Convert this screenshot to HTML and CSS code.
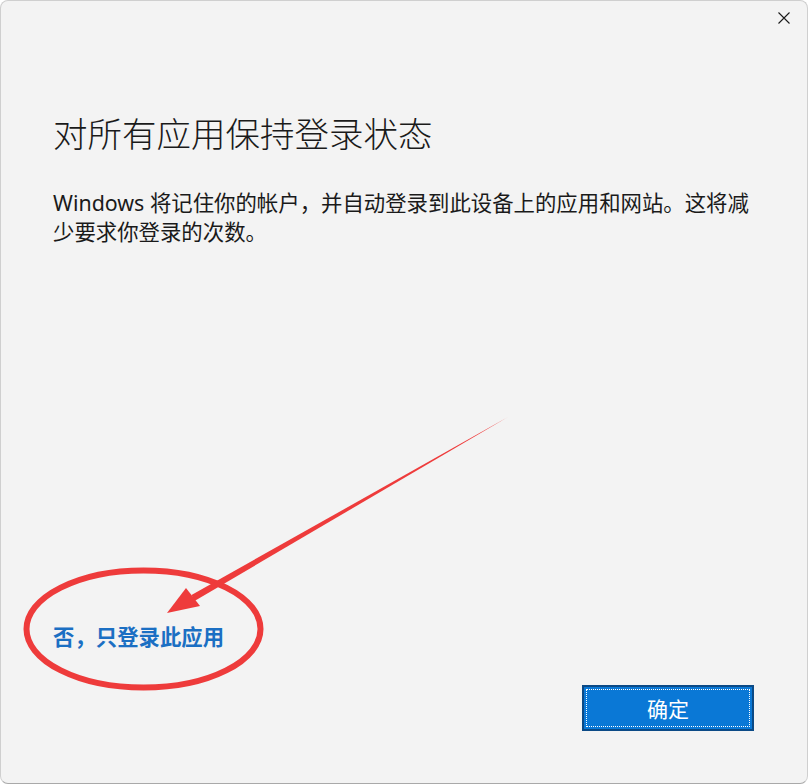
FILE: index.html
```html
<!DOCTYPE html>
<html lang="zh-CN">
<head>
    <meta charset="UTF-8">
    <meta name="viewport" content="width=device-width, initial-scale=1.0">
    <title>对所有应用保持登录状态</title>
    <link rel="stylesheet" href="styles.css">
</head>
<body>
    <div class="window">
        <div class="titlebar">
            <button class="close" aria-label="关闭">
                <svg width="12" height="12" viewBox="0 0 12 12">
                    <path d="M0.5 0.5 L11.5 11.5 M11.5 0.5 L0.5 11.5" stroke="#1a1a1a" stroke-width="1.1" fill="none"/>
                </svg>
            </button>
        </div>
        <div class="content">
            <h1 class="title">对所有应用保持登录状态</h1>
            <p class="desc">Windows 将记住你的帐户，并自动登录到此设备上的应用和网站。这将减少要求你登录的次数。</p>
            <a class="link" href="#">否，只登录此应用</a>
        </div>
        <div class="actions">
            <button class="primary">确定</button>
        </div>

        <!-- red annotation drawn over the dialog -->
        <svg class="markup" width="808" height="784" viewBox="0 0 808 784">
            <ellipse cx="143.5" cy="629" rx="117" ry="58.5" fill="none" stroke="#ee3b3b" stroke-width="6"/>
            <polygon points="508,417 194.5,601 191.5,595" fill="#ee3b3b"/>
            <polygon points="167,613 200,606 186,588" fill="#ee3b3b"/>
        </svg>
    </div>
</body>
</html>
```

FILE: styles.css
```css
html, body {
    margin: 0;
    height: 100%;
    background: #ffffff;
}
body {
    font-family: "Noto Sans", "Noto Sans CJK SC", sans-serif;
    color: #1b1b1b;
}
.window {
    position: relative;
    box-sizing: border-box;
    height: 784px;
    display: flex;
    flex-direction: column;
    background: #f3f3f3;
    border: 1px solid #cfcfcf;
    border-bottom-color: #a9a9a9;
    border-radius: 8px;
}
.titlebar {
    display: flex;
    justify-content: flex-end;
    height: 34px;
}
.close {
    width: 46px;
    height: 34px;
    padding: 0;
    border: none;
    background: transparent;
    display: flex;
    align-items: center;
    justify-content: center;
    border-top-right-radius: 7px;
}
.content {
    flex: 1;
    display: flex;
    flex-direction: column;
    align-items: flex-start;
    padding: 77px 52px 0 52px;
}
.title {
    margin: 0;
    font-size: 34.5px;
    font-weight: 300;
    line-height: 44px;
    color: #1a1a1a;
}
.desc {
    margin: 32px 0 0 0;
    font-size: 21.4px;
    line-height: 29px;
    color: #1a1a1a;
}
.link {
    margin-top: auto;
    font-size: 21.4px;
    line-height: 30px;
    font-weight: 700;
    color: #1b6fc3;
    text-decoration: none;
}
.actions {
    display: flex;
    justify-content: flex-end;
    padding: 33px 53px 52px 53px;
}
.primary {
    width: 172px;
    height: 46px;
    border: 2px solid #0b4a86;
    background: #0a78d6;
    color: #ffffff;
    font-family: "Noto Sans CJK SC", sans-serif;
    font-size: 21px;
    outline: 1px dotted #ffffff;
    outline-offset: -5px;
    cursor: pointer;
}
.markup {
    position: absolute;
    left: -1px;
    top: -1px;
    pointer-events: none;
}
```
